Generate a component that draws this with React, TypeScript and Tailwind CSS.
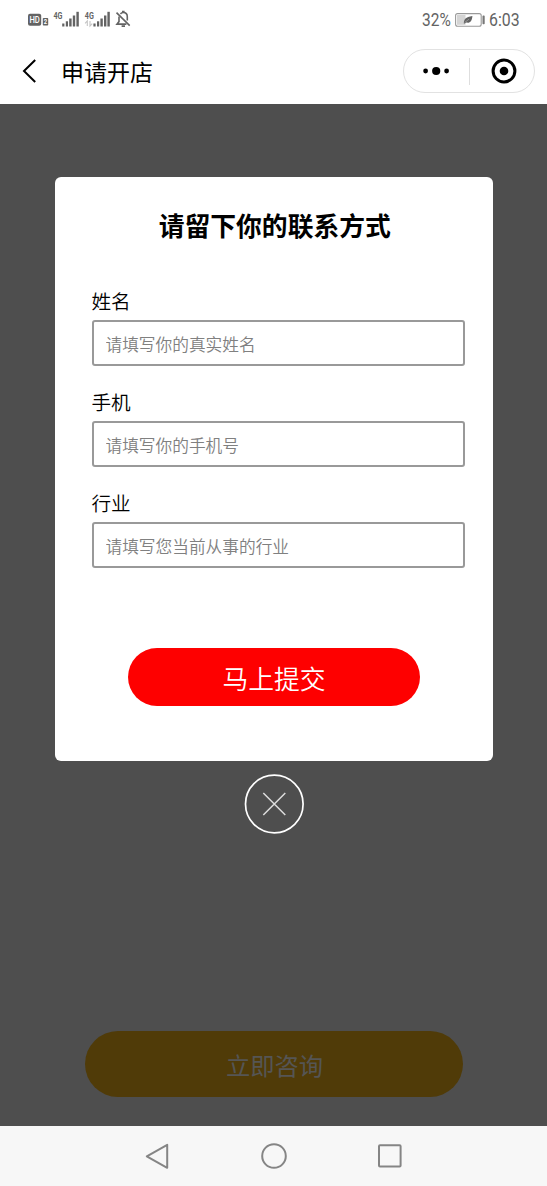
const FIELDS = [
  { id: "name", label: "姓名", placeholder: "请填写你的真实姓名" },
  { id: "phone", label: "手机", placeholder: "请填写你的手机号" },
  { id: "industry", label: "行业", placeholder: "请填写您当前从事的行业" },
];

function SignalIcons() {
  return (
    <svg width="110" height="22" viewBox="0 0 110 22" className="shrink-0" fill="#636363" fontFamily="Roboto, sans-serif">
      {/* HD badge */}
      <rect x="0" y="4.7" width="13.2" height="12" rx="2" />
      <text x="1.4" y="13.8" fontSize="8.8" fontWeight="500" fill="#fff" textLength="10.4" lengthAdjust="spacingAndGlyphs">HD</text>
      <rect x="14.8" y="9" width="5.4" height="7.6" rx="0.8" />
      <text x="15.8" y="15.2" fontSize="6.5" fontWeight="700" fill="#fff" textLength="3.4" lengthAdjust="spacingAndGlyphs">2</text>

      {/* SIM 1 */}
      <text x="25.4" y="9.6" fontSize="9.8" fontWeight="700" textLength="9" lengthAdjust="spacingAndGlyphs">4G</text>
      <rect x="34.2" y="14.5" width="2.2" height="3" />
      <rect x="37.8" y="12.3" width="2.2" height="5.2" />
      <rect x="41.2" y="9.5" width="2.4" height="8" />
      <rect x="44.8" y="6.5" width="2.4" height="11" />
      <rect x="48.4" y="2.8" width="2.4" height="14.7" />

      {/* SIM 2 */}
      <text x="56.8" y="9.6" fontSize="9.8" fontWeight="700" textLength="9" lengthAdjust="spacingAndGlyphs">4G</text>
      <path d="M59.3 17v-5l-2.2 2.4M62 12v5l2.2-2.4" stroke="#c4c4c4" strokeWidth="1.1" fill="none" />
      <rect x="65.4" y="14.5" width="2.2" height="3" />
      <rect x="69" y="12.3" width="2.2" height="5.2" />
      <rect x="72.4" y="9.5" width="2.4" height="8" />
      <rect x="76" y="6.5" width="2.4" height="11" />
      <rect x="79.4" y="2.8" width="2.4" height="14.7" />

      {/* Muted bell */}
      <g fill="none" stroke="#636363" strokeWidth="1.6">
        <path d="M88.5 3.6l13.2 13" />
        <path d="M91 7.4v5.2l-2 2.5h9.4" />
        <path d="M92.4 4.9C93.3 3.9 94 3.5 95.3 3.5c2.5 0 4 1.8 4 4.3v3.6" />
        <path d="M94 2.6h2.6M93.6 17.1h3.4" />
      </g>
    </svg>
  );
}

function BatteryIcon() {
  return (
    <svg width="30" height="14" viewBox="0 0 30 14" className="shrink-0">
      <rect x="0.6" y="0.6" width="25.6" height="12.6" rx="2" fill="#fff" stroke="#999" strokeWidth="1.1" />
      <rect x="2" y="2" width="8.5" height="9.8" fill="#d4d4d4" />
      <path d="M8.8 10.4c.2-4 1.6-6.4 8.6-7.4-.3 4.8-2.2 7.4-6 6.6l-1.7.9z" fill="#636363" />
      <path d="M9.6 9.6l4.4-3.4" stroke="#ddd" strokeWidth="0.4" />
      <rect x="27.5" y="2.6" width="2.2" height="8.6" rx="0.8" fill="#777" />
    </svg>
  );
}

function StatusBar() {
  return (
    <div className="flex h-10 items-center justify-between pl-7 pr-[27px] font-[Roboto,sans-serif] text-[18px] leading-none text-[#636363]">
      <SignalIcons />
      <div className="flex items-center">
        <span className="w-[33px] shrink-0 origin-left scale-x-[0.86]">32%</span>
        <BatteryIcon />
        <span className="ml-1 w-[31px] shrink-0 origin-left scale-x-[0.88]">6:03</span>
      </div>
    </div>
  );
}

function TitleBar() {
  return (
    <header className="flex h-16 items-center pl-[22px] pr-3">
      <svg width="15" height="24" viewBox="0 0 15 24" className="mt-[-2px] shrink-0" fill="none" stroke="#000" strokeWidth="2">
        <path d="M13.2 1L2 12l11.2 11" />
      </svg>
      <h1 className="ml-6 -mt-0.5 text-[23px] leading-none">申请开店</h1>

      <div className="mt-[-2px] ml-auto flex h-11 w-[132px] items-center rounded-full border border-[#e2e2e2]">
        <button className="flex w-[65px] items-center justify-center pr-0.5" aria-label="更多">
          <svg width="26" height="10" viewBox="0 0 26 10">
            <circle cx="2.6" cy="5" r="2.4" />
            <circle cx="13.2" cy="5" r="4.1" />
            <circle cx="23.6" cy="5" r="2.4" />
          </svg>
        </button>
        <span className="h-[27px] w-px bg-[#dedede]" />
        <button className="flex flex-1 items-center justify-center pl-[3px]" aria-label="关闭">
          <svg width="26" height="26" viewBox="0 0 26 26">
            <circle cx="13" cy="13" r="10.9" fill="none" stroke="#000" strokeWidth="3" />
            <circle cx="13" cy="13" r="4.3" />
          </svg>
        </button>
      </div>
    </header>
  );
}

function ContactDialog() {
  return (
    <div className="flex h-[584px] w-[438px] flex-col rounded-md bg-white pl-[37px] pr-[27.5px] pt-[29px]">
      <h2 className="-ml-[9px] -mr-[2px] text-center text-[25.8px] font-bold leading-[38px]">请留下你的联系方式</h2>

      <form className="mt-[41px] flex flex-col gap-5">
        {FIELDS.map((field) => (
          <div key={field.id} className="flex h-[81px] flex-col justify-between">
            <label htmlFor={field.id} className="text-[19.6px] font-[350] leading-8">
              {field.label}
            </label>
            <input
              id={field.id}
              placeholder={field.placeholder}
              className="h-[46px] w-full rounded-[3px] border-2 border-[#999] px-3 pt-px text-[16.7px] font-[350] placeholder:text-[#808080]"
            />
          </div>
        ))}
      </form>

      <button className="ml-9 mt-20 h-[58px] w-[292px] rounded-full bg-[#fe0000] pl-px pt-0.5 text-[25.8px] font-[350] leading-none text-white">
        马上提交
      </button>
    </div>
  );
}

function NavBar() {
  return (
    <nav className="flex h-[60px] items-center justify-between bg-[#f7f7f7] pl-[143px] pr-[143px]">
      <svg width="28" height="28" viewBox="0 0 28 28" fill="none" stroke="#858585" strokeWidth="2" strokeLinejoin="round">
        <path d="M24.2 2.8v23L3.8 14.3z" />
      </svg>
      <svg width="28" height="28" viewBox="0 0 28 28" fill="none" stroke="#858585" strokeWidth="2">
        <circle cx="14" cy="14" r="11.8" />
      </svg>
      <svg width="28" height="28" viewBox="0 0 28 28" fill="none" stroke="#858585" strokeWidth="2">
        <rect x="3" y="3.3" width="21.6" height="21.2" rx="1" />
      </svg>
    </nav>
  );
}

export default function App() {
  return (
    <div className="flex h-[1186px] w-[547px] flex-col overflow-hidden bg-white font-['Noto_Sans_CJK_SC',sans-serif] text-black">
      <StatusBar />
      <TitleBar />

      <main className="flex flex-1 flex-col items-center bg-[#4e4e4e] pb-[29px] pt-[73px]">
        <ContactDialog />

        <button className="mt-[13px] size-[60px]" aria-label="关闭弹窗">
          <svg width="60" height="60" viewBox="0 0 60 60" fill="none" stroke="#fff">
            <circle cx="30.3" cy="30" r="28.8" strokeWidth="1.7" />
            <path d="M19.3 19l22 22M41.3 19l-22 22" strokeWidth="1.5" stroke="#ddd" />
          </svg>
        </button>

        {/* Page button, dimmed by the overlay */}
        <button className="mt-auto h-[66px] w-[378px] rounded-full bg-[#503b08] pl-0.5 pt-0.5 text-[24.3px] leading-none text-[#555555]">
          立即咨询
        </button>
      </main>

      <NavBar />
    </div>
  );
}
